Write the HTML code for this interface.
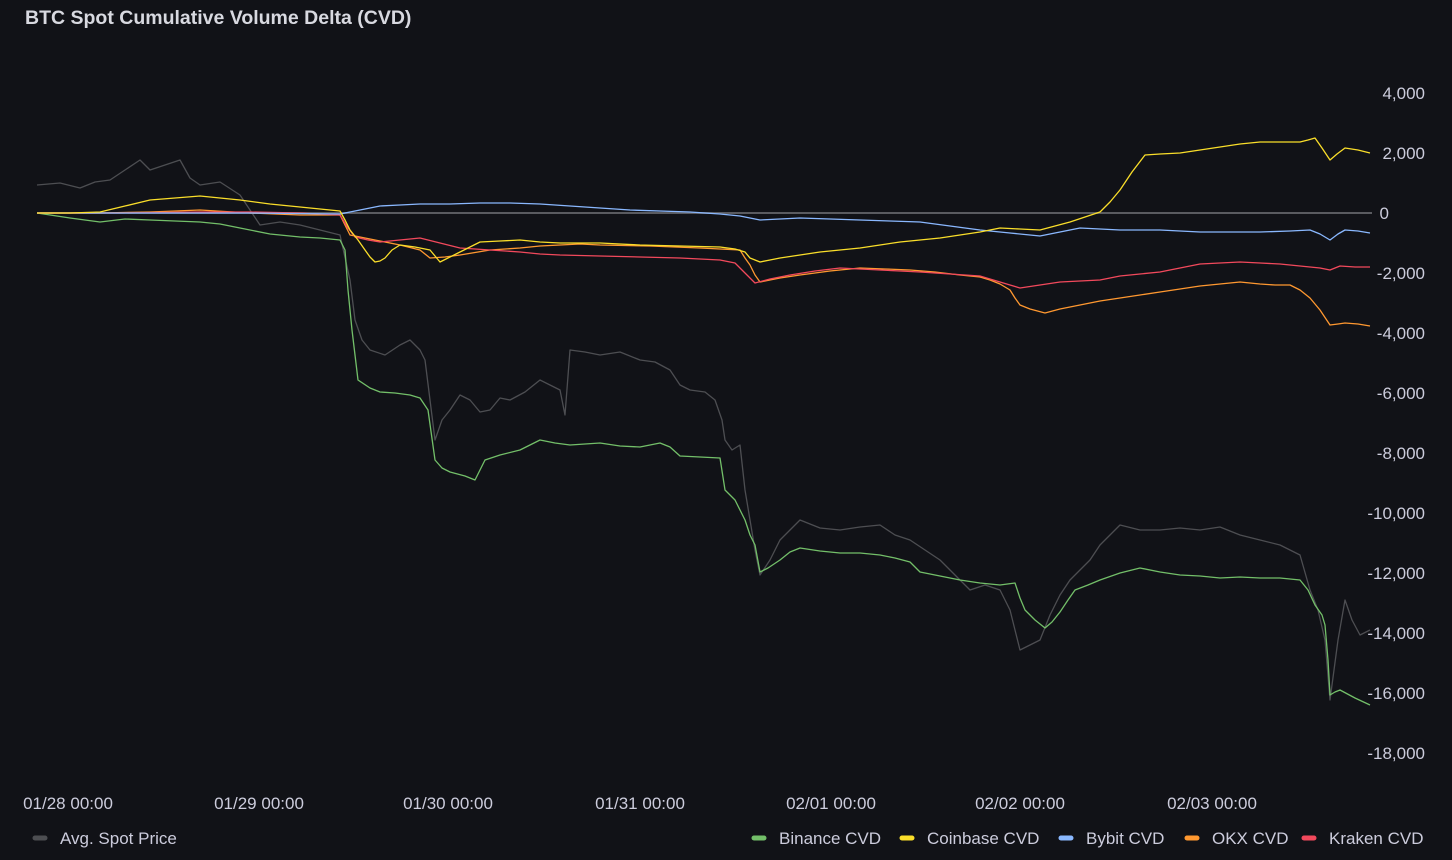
<!DOCTYPE html>
<html><head><meta charset="utf-8"><style>
html,body{margin:0;padding:0;background:#111217;width:1452px;height:860px;overflow:hidden;font-family:"Liberation Sans",sans-serif;color:#ccccdc}
.t{position:absolute;left:25px;top:7px;font-size:19.5px;font-weight:bold;color:#d8d9e0}
svg{position:absolute;left:0;top:0}
</style></head><body>
<div class="t">BTC Spot Cumulative Volume Delta (CVD)</div>
<svg width="1452" height="860" font-family="Liberation Sans, sans-serif" font-size="17" fill="#ccccdc">
<g text-anchor="end">
<text x="1425" y="99">4,000</text><text x="1425" y="159">2,000</text><text x="1389" y="219">0</text>
<text x="1425" y="279">-2,000</text><text x="1425" y="339">-4,000</text><text x="1425" y="399">-6,000</text>
<text x="1425" y="459">-8,000</text><text x="1425" y="519">-10,000</text><text x="1425" y="579">-12,000</text>
<text x="1425" y="639">-14,000</text><text x="1425" y="699">-16,000</text><text x="1425" y="759">-18,000</text>
</g>
<g text-anchor="middle">
<text x="68" y="809">01/28 00:00</text><text x="259" y="809">01/29 00:00</text><text x="448" y="809">01/30 00:00</text>
<text x="640" y="809">01/31 00:00</text><text x="831" y="809">02/01 00:00</text><text x="1020" y="809">02/02 00:00</text>
<text x="1212" y="809">02/03 00:00</text>
</g>
<rect x="0" y="790" width="23" height="25" fill="#111217"/>
<line x1="37" y1="213" x2="1372" y2="213" stroke="#5a5b60" stroke-width="2"/>
<g fill="none" stroke-width="1.3" stroke-linejoin="round">
<polyline stroke="#4d4e52" points="37,185 60,183 80,188 95,182 110,180 125,170 140,160 150,170 165,165 180,160 190,178 200,185 220,182 240,195 260,225 280,222 300,225 320,230 340,235 350,280 355,320 362,340 370,350 385,355 400,345 410,340 420,350 425,360 435,440 442,420 450,410 460,395 470,400 480,412 490,410 500,398 510,400 525,392 540,380 550,385 560,390 565,415 570,350 585,352 600,355 620,352 640,360 655,362 670,370 680,385 690,390 705,392 715,400 722,420 725,440 732,450 740,445 745,490 750,520 755,550 760,575 770,560 780,540 790,530 800,520 820,528 840,530 860,527 880,525 895,535 910,540 925,550 940,560 955,575 970,590 985,585 1000,590 1010,610 1020,650 1030,645 1040,640 1050,615 1060,595 1070,580 1080,570 1090,560 1100,545 1110,535 1120,525 1140,530 1160,530 1180,528 1200,530 1220,527 1240,535 1260,540 1280,545 1300,555 1310,590 1318,610 1325,640 1330,700 1338,640 1345,600 1352,620 1360,635 1370,630"/>
<polyline stroke="#73bf69" points="37,213 70,218 100,222 125,219 150,220 175,221 200,222 220,224 240,228 270,234 300,237 320,238 340,240 345,250 348,290 352,330 358,380 370,388 380,392 395,393 410,395 420,398 428,410 435,460 442,468 450,472 465,476 475,480 480,470 485,460 500,455 520,450 530,445 540,440 555,443 570,445 585,444 600,443 620,446 640,447 650,445 660,443 670,447 680,456 700,457 720,458 725,490 735,500 745,520 750,535 755,545 760,572 768,568 780,560 790,552 800,548 820,551 840,553 860,553 880,555 895,558 910,562 920,572 940,576 960,580 980,583 1000,585 1015,583 1020,598 1025,610 1035,620 1045,628 1052,622 1060,612 1068,600 1075,590 1088,585 1100,580 1120,573 1140,568 1160,572 1180,575 1200,576 1220,578 1240,577 1260,578 1280,578 1300,580 1308,590 1315,605 1322,615 1325,625 1328,660 1330,695 1335,692 1340,690 1355,698 1370,705"/>
<polyline stroke="#ff9830" points="37,213 100,213 150,212 175,211 200,210 250,213 300,215 340,215 345,225 350,235 375,240 400,245 420,250 430,258 445,257 460,255 490,250 520,248 540,246 560,245 580,244 600,245 650,246 700,248 740,250 745,258 750,265 755,275 760,282 780,278 800,275 830,271 860,268 885,269 910,270 935,272 960,275 980,277 990,280 1000,284 1010,290 1015,298 1020,305 1030,309 1045,313 1060,309 1080,305 1100,301 1120,298 1140,295 1160,292 1180,289 1200,286 1220,284 1240,282 1250,283 1260,284 1275,285 1290,285 1300,290 1310,298 1320,310 1330,325 1338,324 1345,323 1358,324 1370,326"/>
<polyline stroke="#f2495c" points="37,213 120,213 200,212 250,212 300,213 340,215 348,228 355,237 368,240 380,242 400,240 420,238 440,243 460,248 490,250 520,252 540,254 560,255 600,256 640,257 680,258 720,260 735,263 740,268 748,276 755,283 770,279 790,275 815,271 840,268 860,269 880,270 900,271 920,272 950,274 980,276 990,279 1000,282 1010,285 1020,288 1040,285 1060,282 1080,281 1100,280 1110,278 1120,276 1140,274 1160,272 1180,268 1200,264 1220,263 1240,262 1260,263 1280,264 1300,266 1320,268 1330,270 1340,266 1355,267 1370,267"/>
<polyline stroke="#8ab8ff" points="37,213 150,213 250,213 340,214 360,210 380,206 400,205 420,204 450,204 480,203 510,203 540,204 570,206 600,208 630,210 660,211 690,212 720,214 740,216 760,220 780,219 800,218 830,219 860,220 890,221 920,222 950,226 980,230 1010,233 1040,236 1060,232 1080,228 1100,229 1120,230 1140,230 1160,230 1180,231 1200,232 1230,232 1260,232 1290,231 1310,230 1320,234 1330,240 1338,234 1345,230 1358,231 1370,233"/>
<polyline stroke="#fade2a" points="37,213 70,213 100,212 125,206 150,200 175,198 200,196 220,198 240,200 270,204 300,207 320,209 340,211 345,220 350,230 358,240 365,250 370,257 375,262 380,261 385,258 392,250 400,245 415,247 430,250 435,256 440,262 460,252 480,242 500,241 520,240 540,242 560,243 580,243 600,243 620,244 640,245 680,246 720,247 735,249 745,252 750,258 760,262 770,260 780,258 800,255 820,252 840,250 860,248 880,245 900,242 920,240 940,238 960,235 980,232 990,230 1000,228 1020,229 1040,230 1055,226 1070,222 1085,217 1100,212 1110,202 1120,190 1132,172 1145,155 1160,154 1180,153 1200,150 1220,147 1240,144 1260,142 1280,142 1300,142 1308,140 1315,138 1322,148 1330,160 1337,154 1345,148 1358,150 1370,153"/>
</g>
<g stroke-width="5" stroke-linecap="round">
<line x1="35" y1="838" x2="45" y2="838" stroke="#4d4e52"/>
<line x1="754" y1="838" x2="764" y2="838" stroke="#73bf69"/>
<line x1="902" y1="838" x2="912" y2="838" stroke="#fade2a"/>
<line x1="1061" y1="838" x2="1071" y2="838" stroke="#8ab8ff"/>
<line x1="1187" y1="838" x2="1197" y2="838" stroke="#ff9830"/>
<line x1="1304" y1="838" x2="1314" y2="838" stroke="#f2495c"/>
</g>
<text x="60" y="844">Avg. Spot Price</text>
<text x="779" y="844">Binance CVD</text>
<text x="927" y="844">Coinbase CVD</text>
<text x="1086" y="844">Bybit CVD</text>
<text x="1212" y="844">OKX CVD</text>
<text x="1329" y="844">Kraken CVD</text>
</svg>
</body></html>
